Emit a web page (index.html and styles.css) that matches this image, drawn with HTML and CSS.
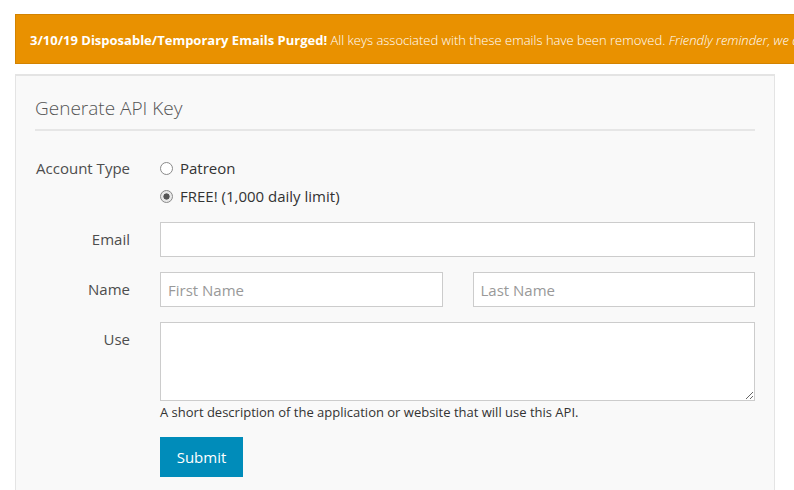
FILE: index.html
```html
<!DOCTYPE html>
<html>
<head>
<meta charset="utf-8">
<link rel="stylesheet" href="styles.css">
</head>
<body>
<div class="page">
  <div class="alert">
    <strong>3/10/19 Disposable/Temporary Emails Purged!</strong> All keys associated with these emails have been removed. <em>Friendly reminder, we do not allow disposable or temporary emails.</em>
  </div>
  <div class="panel">
    <h3 class="title">Generate API Key</h3>
    <form class="form">
      <div class="row">
        <label class="label">Account Type</label>
        <div class="field radios">
          <label class="radio"><input type="radio" name="type"> Patreon</label>
          <label class="radio"><input type="radio" name="type" checked> FREE! (1,000 daily limit)</label>
        </div>
      </div>
      <div class="row">
        <label class="label pad">Email</label>
        <div class="field"><input class="input" type="text"></div>
      </div>
      <div class="row">
        <label class="label pad">Name</label>
        <div class="field pair">
          <input class="input" type="text" placeholder="First Name">
          <input class="input" type="text" placeholder="Last Name">
        </div>
      </div>
      <div class="row">
        <label class="label pad">Use</label>
        <div class="field">
          <textarea class="input area"></textarea>
          <p class="help">A short description of the application or website that will use this API.</p>
          <button class="btn" type="button">Submit</button>
        </div>
      </div>
    </form>
  </div>
</div>
</body>
</html>
```
FILE: styles.css
```css
html, body {
  margin: 0;
  padding: 0;
  background: #fff;
  overflow: hidden;
  font-family: "Open Sans", "Liberation Sans", sans-serif;
  color: #222;
}
.page {
  width: 760px;
  margin-left: 15px;
  padding-top: 14px;
}
.alert {
  margin-right: -60px;
  background: #e99100;
  border: 1px solid #d38300;
  color: #fff;
  font-size: 13px;
  font-weight: 300;
  line-height: 18px;
  height: 50px;
  box-sizing: border-box;
  padding: 16px 14px 0;
  white-space: nowrap;
  overflow: hidden;
}
.alert strong { font-weight: 700; }
.alert em { font-style: italic; }
.panel {
  margin-top: 10px;
  background: #f9f9f9;
  border: 1px solid #e4e4e4;
  border-top-width: 2px;
  padding: 18px 19px 20px 19px;
  height: 420px;
  box-sizing: border-box;
}
.title {
  margin: 0;
  font-weight: 300;
  font-size: 19px;
  line-height: 28px;
  color: #555;
  padding-bottom: 7px;
  border-bottom: 2px solid #e6e6e6;
}
.form {
  margin-top: 27px;
}
.row {
  display: flex;
  margin-bottom: 15px;
}
.label {
  width: 95px;
  flex: none;
  text-align: right;
  font-size: 15px;
  color: #4d4d4d;
  line-height: 21px;
  margin-right: 30px;
  white-space: nowrap;
}
.label.pad { padding-top: 7px; }
.field { flex: 1; min-width: 0; }
.radios {
  display: flex;
  flex-direction: column;
  gap: 7px;
}
.radio {
  display: flex;
  align-items: center;
  font-size: 15px;
  line-height: 21px;
  color: #333;
}
.radio input {
  appearance: none;
  -webkit-appearance: none;
  width: 13px;
  height: 13px;
  margin: 0 7px 0 0;
  border: 1px solid #8a8a8a;
  border-radius: 50%;
  background: #fff;
  box-sizing: border-box;
}
.radio input:checked {
  border-color: #8a8a8a;
  background: radial-gradient(circle, #555 0 2.8px, #e8e8e8 3.4px);
}
.input {
  display: block;
  width: 100%;
  height: 35px;
  box-sizing: border-box;
  border: 1px solid #ccc;
  background: #fff;
  font-family: inherit;
  font-size: 15px;
  padding: 0 7px;
  color: #333;
}
.input::placeholder { color: #999; }
.pair {
  display: flex;
  gap: 30px;
}
.pair .input { flex: 1; width: auto; min-width: 0; }
.area {
  height: 79px;
  padding: 8px;
}
.help {
  margin: 2px 0 0;
  font-size: 13px;
  line-height: 18px;
  color: #333;
}
.btn {
  margin-top: 16px;
  background: #008cba;
  border: 0;
  color: #fff;
  font-family: inherit;
  font-size: 15px;
  width: 83px;
  height: 40px;
  padding: 0;
}
```
